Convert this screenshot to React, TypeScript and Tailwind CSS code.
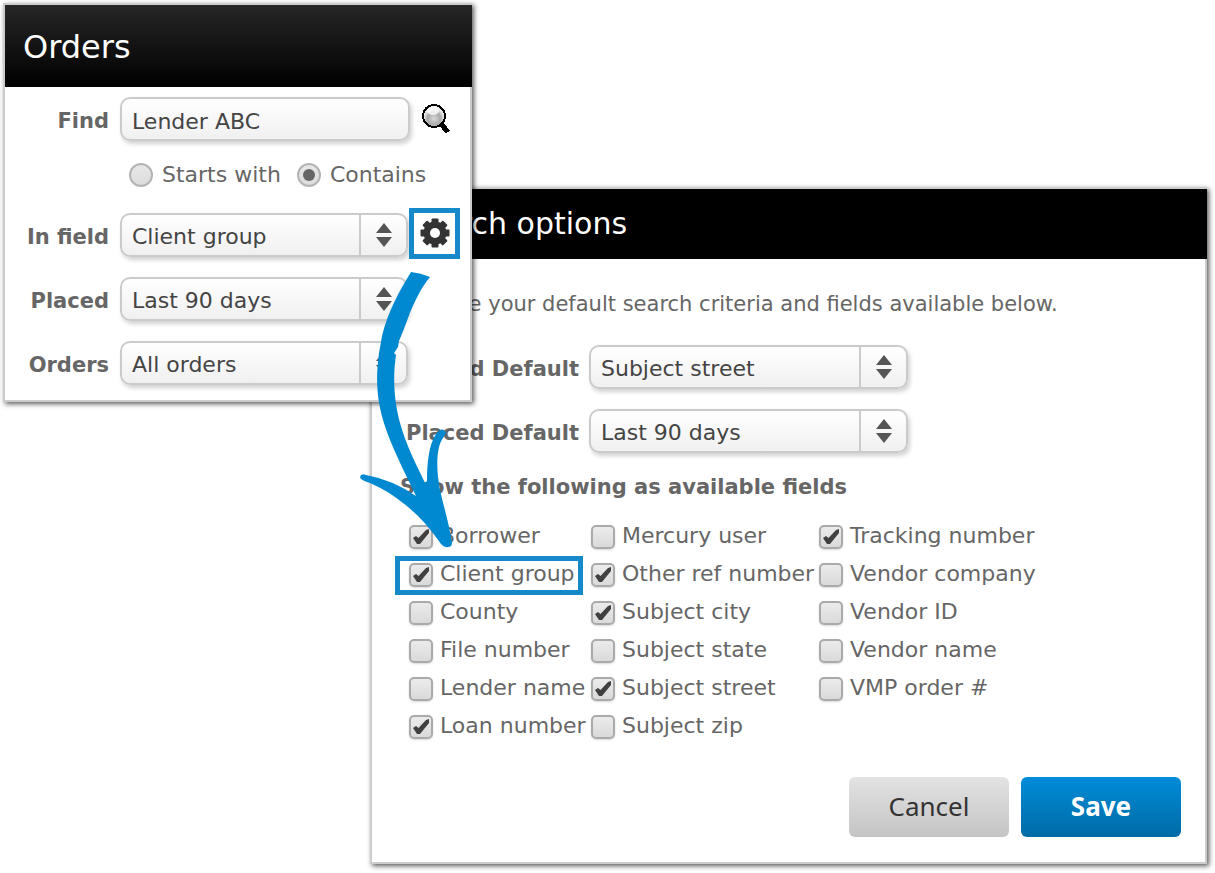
import React from 'react';

interface SelectFieldProps {
  id: string;
  options: string[];
  className?: string;
}

interface FieldOption {
  name: string;
  checked?: boolean;
  highlighted?: boolean;
}

const fieldColumns: FieldOption[][] = [
  [
    { name: 'Borrower', checked: true },
    { name: 'Client group', checked: true, highlighted: true },
    { name: 'County' },
    { name: 'File number' },
    { name: 'Lender name' },
    { name: 'Loan number', checked: true },
  ],
  [
    { name: 'Mercury user' },
    { name: 'Other ref number', checked: true },
    { name: 'Subject city', checked: true },
    { name: 'Subject state' },
    { name: 'Subject street', checked: true },
    { name: 'Subject zip' },
  ],
  [
    { name: 'Tracking number', checked: true },
    { name: 'Vendor company' },
    { name: 'Vendor ID' },
    { name: 'Vendor name' },
    { name: 'VMP order #' },
  ],
];

const SelectField: React.FC<SelectFieldProps> = ({ id, options, className = '' }) => (
  <div className={`relative h-11 ${className}`}>
    <select
      id={id}
      className="h-full w-full appearance-none rounded-[10px] border-2 border-[#cbcbcb] bg-linear-to-b from-white to-[#f0f0f0] pl-[10px] pr-12 pt-1 text-[#444] shadow-[2px_3px_4px_rgba(0,0,0,0.18)]"
    >
      {options.map((option) => (
        <option key={option}>{option}</option>
      ))}
    </select>
    <span className="pointer-events-none absolute inset-y-[2px] right-[2px] flex w-[47px] items-center justify-center border-l-2 border-[#cbcbcb]">
      <svg width="16" height="26" viewBox="0 0 16 26" fill="#555" aria-hidden="true">
        <path d="M8 1 16 11H0Z M0 15H16L8 25Z" />
      </svg>
    </span>
  </div>
);

const RadioOption: React.FC<{ label: string; checked?: boolean }> = ({ label, checked }) => (
  <label className="flex items-center gap-[9px]">
    <span className="grid place-items-center">
      <input
        type="radio"
        name="match"
        defaultChecked={checked}
        className="peer col-start-1 row-start-1 size-6 appearance-none rounded-full border-2 border-[#b4b4b4] bg-linear-to-b from-[#e8e8e8] to-[#dcdcdc]"
      />
      <span className="pointer-events-none col-start-1 row-start-1 hidden size-3 rounded-full bg-[#666] peer-checked:block" />
    </span>
    {label}
  </label>
);

const CheckOption: React.FC<{ option: FieldOption }> = ({ option }) => (
  <label className="relative flex h-[38px] w-fit items-center gap-[7px] whitespace-nowrap">
    <span className="grid place-items-center pt-[2px]">
      <input
        type="checkbox"
        defaultChecked={option.checked}
        className="peer col-start-1 row-start-1 size-6 appearance-none rounded-[5px] border-2 border-[#aaa] bg-linear-to-b from-[#ebebeb] to-[#dadada] shadow-[0_1px_2px_rgba(0,0,0,0.15)]"
      />
      <svg
        className="pointer-events-none invisible col-start-1 row-start-1 peer-checked:visible"
        width="24"
        height="24"
        viewBox="0 0 24 24"
        aria-hidden="true"
      >
        <path d="M4 13 7 11 9.500 13 17 5 20 4V8L11 19H8Z" fill="#404040" />
      </svg>
    </span>
    {option.name}
    {option.highlighted && (
      <span className="pointer-events-none absolute -left-[14px] -right-2 top-px h-[39px] border-[5px] border-[#1689cb]" />
    )}
  </label>
);

const SearchIcon = () => (
  <svg width="28" height="30" viewBox="0 0 28 30" aria-hidden="true">
    <defs>
      <radialGradient id="lens" cx="50%" cy="62%" r="60%">
        <stop offset="0" stopColor="#d8d8d8" />
        <stop offset="0.5" stopColor="#a8a8a8" />
        <stop offset="0.75" stopColor="#e4e4e4" />
        <stop offset="1" stopColor="#f4f4f4" />
      </radialGradient>
    </defs>
    <circle cx="12" cy="12" r="11" fill="url(#lens)" stroke="#000" strokeWidth="2" shapeRendering="crispEdges" />
    <ellipse cx="11" cy="7" rx="6" ry="4" fill="#fff" opacity="0.8" />
    <path d="M19 20 26 28" stroke="#000" strokeWidth="5" shapeRendering="crispEdges" />
  </svg>
);

const GearIcon = () => (
  <svg width="30" height="30" viewBox="-15 -15 30 30" aria-hidden="true">
    <g fill="#333">
      {[0, 45, 90, 135].map((angle) => (
        <rect key={angle} x="-3.500" y="-14.500" width="7" height="29" rx="1" transform={`rotate(${angle})`} />
      ))}
      <circle r="11.500" />
    </g>
    <circle r="5" fill="#fff" />
  </svg>
);

const OrdersPanel = () => (
  <section className="absolute left-[3px] top-[3px] w-[469px] border-2 border-t-0 border-[#ccc] bg-white pb-[15px] shadow-[2px_2px_5px_rgba(0,0,0,0.65)]">
    <div className="-mr-[2px] border-t-2 border-[#ccc]">
      <h1 className="flex h-[82px] items-center bg-linear-to-b/srgb from-[#262626] to-black pl-[18px] pt-[2px] text-[32px] text-white">
        Orders
      </h1>
    </div>
    <form className="flex flex-col gap-5 pt-[10px]">
      <div>
        <div className="flex items-center">
          <label htmlFor="find" className="w-[104px] pt-1 text-right text-[21px] font-bold">Find</label>
          <input
            id="find"
            defaultValue="Lender ABC"
            className="ml-[11px] h-11 w-[290px] rounded-[10px] border-2 border-[#cbcbcb] bg-linear-to-b from-white to-[#f0f0f0] px-[10px] pt-1 text-[#444] shadow-[2px_3px_4px_rgba(0,0,0,0.18)]"
          />
          <button type="button" aria-label="Search" className="ml-3">
            <SearchIcon />
          </button>
        </div>
        <div className="ml-[124px] flex h-[52px] items-end gap-[16px] pb-[2px]">
          <RadioOption label="Starts with" />
          <RadioOption label="Contains" checked />
        </div>
      </div>
      <div className="flex items-center">
        <label htmlFor="in-field" className="w-[104px] pt-1 text-right text-[21px] font-bold">In field</label>
        <SelectField id="in-field" options={['Client group', 'Borrower', 'Subject street']} className="ml-[11px] w-[288px]" />
        <button
          type="button"
          aria-label="Search options"
          className="relative -mb-[2px] -mt-[6px] ml-px flex size-[51px] items-center justify-center border-[5px] border-[#1689cb] bg-white"
        >
          <GearIcon />
        </button>
      </div>
      <div className="flex items-center">
        <label htmlFor="placed" className="w-[104px] pt-1 text-right text-[21px] font-bold">Placed</label>
        <SelectField id="placed" options={['Last 90 days', 'Last 30 days']} className="ml-[11px] w-[288px]" />
      </div>
      <div className="flex items-center">
        <label htmlFor="orders" className="w-[104px] pt-1 text-right text-[21px] font-bold">Orders</label>
        <SelectField id="orders" options={['All orders', 'My orders']} className="ml-[11px] w-[288px]" />
      </div>
    </form>
  </section>
);

const SearchOptions = () => (
  <section className="ml-[370px] mr-2 border-2 border-[#ccc] bg-white shadow-[2px_2px_5px_rgba(0,0,0,0.65)]">
    <h2 className="-mr-[2px] flex h-[70px] items-center bg-black pl-8 text-[30px] text-white">Search options</h2>
    <form className="px-7 pb-[25px] pt-7">
      <p className="h-8 pl-1 pt-px text-[21px]">Choose your default search criteria and fields available below.</p>
      <div className="mt-[26px] flex flex-col gap-5">
        <div className="flex items-center gap-[10px]">
          <label htmlFor="field-default" className="w-[179px] whitespace-nowrap pt-1 text-right text-[21px] font-bold">Field Default</label>
          <SelectField id="field-default" options={['Subject street', 'Client group']} className="w-[319px]" />
        </div>
        <div className="flex items-center gap-[10px]">
          <label htmlFor="placed-default" className="w-[179px] whitespace-nowrap pt-1 text-right text-[21px] font-bold">Placed Default</label>
          <SelectField id="placed-default" options={['Last 90 days', 'Last 30 days']} className="w-[319px]" />
        </div>
      </div>
      <fieldset>
        <legend className="pt-[18px] text-[21px] font-bold">Show the following as available fields</legend>
        <div className="flex pl-[9px] pt-[14px]">
          {fieldColumns.map((column, index) => (
            <div key={index} className="w-[182px] even:w-[228px]">
              {column.map((option) => (
                <CheckOption key={option.name} option={option} />
              ))}
            </div>
          ))}
        </div>
      </fieldset>
      <div className="-mr-1 mt-8 flex justify-end gap-3 font-['Noto_Sans',sans-serif] text-[26px]">
        <button type="button" className="h-[60px] w-40 rounded-md bg-linear-to-b from-[#e3e3e3] to-[#c4c4c4] pb-[2px] text-[#333]">
          Cancel
        </button>
        <button type="submit" className="h-[60px] w-40 rounded-md bg-linear-to-b from-[#008cd9] to-[#006ba5] pb-[2px] font-bold text-white">
          Save
        </button>
      </div>
    </form>
  </section>
);

const Arrow = () => (
  <svg
    className="pointer-events-none absolute left-[360px] top-[271px]"
    width="92"
    height="278"
    viewBox="360 271 92 278"
    fill="#0089d0"
    aria-hidden="true"
  >
    <path d="M411 272Q421 273 430 277C421 288 414 302 408 318Q403 332 399 341L398 347 394 353 396 355C393 375 394 393 397 410C402 437 414 460 425 483L427 481C427 463 429 444 436 434Q440 428 444 430Q448 433 443 438C436 447 436 470 440 490C444 508 449 523 452 543Q452 547 448 547Q444 548 441 544C434 534 427 525 417 515C402 501 388 491 370 483Q360 480 360 477Q361 473 366 475Q393 480 416 496C403 469 389 441 383 420C376 395 376 376 379 353L382 336C388 311 400 290 411 272Z" />
  </svg>
);

const App: React.FC = () => (
  <main className="relative bg-white pt-[187px] pb-2 font-['DejaVu_Sans',sans-serif] text-[22px] leading-8 text-[#666]">
    <SearchOptions />
    <OrdersPanel />
    <Arrow />
  </main>
);

export default App;
